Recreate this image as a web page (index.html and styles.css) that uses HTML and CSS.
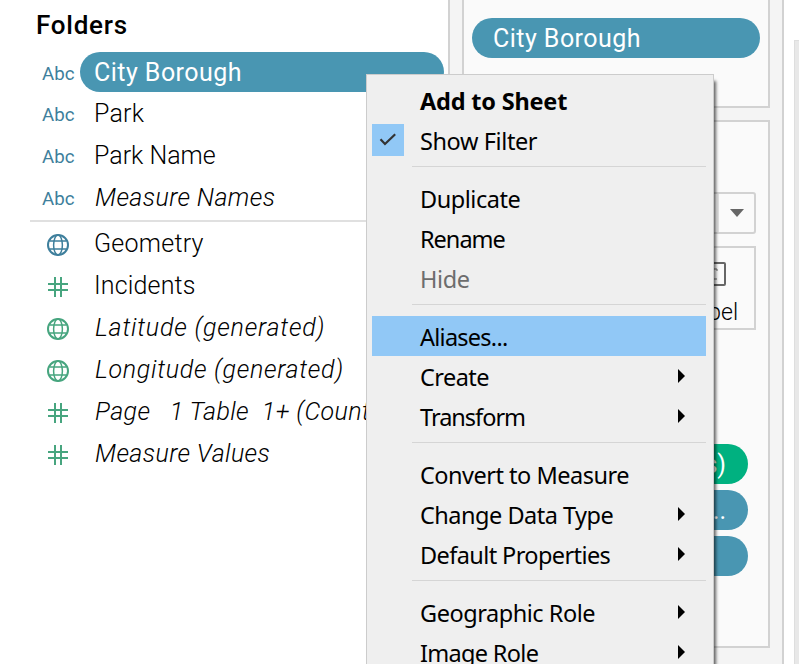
FILE: index.html
```html
<!DOCTYPE html>
<html lang="en">
<head>
<meta charset="utf-8">
<title>Sheet</title>
<link rel="stylesheet" href="styles.css">
</head>
<body>
<svg class="defs" width="0" height="0">
  <symbol id="globe" viewBox="0 0 22 22"><g fill="none" stroke="currentColor"><circle cx="11" cy="11" r="10" stroke-width="2"/><ellipse cx="11" cy="11" rx="4.4" ry="10" stroke-width="1.5"/><path d="M2.5 7h17M2.5 15h17" stroke-width="1.5"/></g></symbol>
  <symbol id="hash" viewBox="0 0 22 22"><path d="M8 1v20M14 1v20M1 8h20M1 14h20" stroke="currentColor" stroke-width="2" fill="none"/></symbol>
</svg>
<div class="app">
  <section class="data">
    <h2><span>Folders</span></h2>
    <ul class="fields">
      <li class="selected"><span class="abc">Abc</span><span class="name n1">City Borough</span></li>
      <li><span class="abc">Abc</span><span class="name n2">Park</span></li>
      <li><span class="abc">Abc</span><span class="name n3">Park Name</span></li>
      <li><span class="abc">Abc</span><span class="name gen n4">Measure Names</span></li>
    </ul>
    <ul class="fields measures">
      <li><svg class="icon blue"><use href="#globe"/></svg><span class="name n5">Geometry</span></li>
      <li><svg class="icon"><use href="#hash"/></svg><span class="name n6">Incidents</span></li>
      <li><svg class="icon"><use href="#globe"/></svg><span class="name gen n7">Latitude (generated)</span></li>
      <li><svg class="icon"><use href="#globe"/></svg><span class="name gen n8">Longitude (generated)</span></li>
      <li><svg class="icon"><use href="#hash"/></svg><span class="name gen n9">Page &nbsp; 1 Table &nbsp;1+ (Count)</span></li>
      <li><svg class="icon"><use href="#hash"/></svg><span class="name gen n10">Measure Values</span></li>
    </ul>
  </section>
  <section class="shelves">
    <div class="card filters"><div class="pill"><span class="n11">City Borough</span></div></div>
    <div class="card marks">
      <div class="combo"><svg width="14" height="8"><path d="M0 0h14L7 8z" fill="#666"/></svg></div>
      <div class="label-btn">
        <svg width="30" height="24" viewBox="0 0 30 24"><rect x="1" y="1" width="28" height="22" rx="1" fill="none" stroke="#666" stroke-width="2"/><path d="M11 9V7h10v2M16 7v10M13 17h8" stroke="#666" fill="none"/></svg>
        <span>Label</span>
      </div>
      <div class="mark-pills">
        <div class="pill green"><span>s)</span></div>
        <div class="pill"><span class="dots">...</span></div>
        <div class="pill"></div>
      </div>
    </div>
  </section>
  <section class="view"><div class="map"></div></section>
</div>
<nav class="menu">
  <div class="item bold"><span class="m1">Add to Sheet</span></div>
  <div class="item"><i class="check"><svg width="18" height="14" viewBox="0 0 18 14"><path d="M1.5 6.2 6 11 16.2 1.3" fill="none" stroke="#333" stroke-width="2.2"/></svg></i><span class="m2">Show Filter</span></div>
  <hr>
  <div class="item"><span class="m3">Duplicate</span></div>
  <div class="item"><span class="m4">Rename</span></div>
  <div class="item disabled"><span class="m5">Hide</span></div>
  <hr>
  <div class="item active"><span class="m6">Aliases...</span></div>
  <div class="item sub"><span class="m7">Create</span></div>
  <div class="item sub"><span class="m8">Transform</span></div>
  <hr>
  <div class="item"><span class="m9">Convert to Measure</span></div>
  <div class="item sub"><span class="m10">Change Data Type</span></div>
  <div class="item sub"><span class="m11">Default Properties</span></div>
  <hr>
  <div class="item sub"><span class="m12">Geographic Role</span></div>
  <div class="item sub"><span class="m13">Image Role</span></div>
</nav>
</body>
</html>
```
FILE: styles.css
```css
* { box-sizing: border-box; }
body { margin: 0; width: 799px; height: 664px; overflow: hidden; background: #fff; color: #000; font-family: Roboto, sans-serif; font-size: 25px; }
.defs { position: absolute; }
.app { display: flex; height: 664px; }
.data { width: 448px; flex: none; overflow: hidden; }
h2 { margin: 0; padding: 5px 0 0 36px; height: 52px; font-size: 26px; font-weight: 500; line-height: 40px; letter-spacing: .75px; }
.fields { list-style: none; margin: 0; padding: 0; }
.fields li { display: flex; align-items: center; height: 42px; padding-right: 4px; white-space: pre; }
.fields li.selected { height: 40px; }
.name { flex: 1; height: 40px; line-height: 42px; padding-left: 14px; font-weight: 300; }
.gen { font-style: italic; padding-left: 15px; }
.selected .name { background: #4996b2; color: #fff; border-radius: 20px; font-weight: 400; }
.abc { width: 80px; padding: 3px 0 0 42px; font-size: 18.7px; color: #3e7f9c; }
.measures { margin: 3px 0 0; }
.measures::before { content: ""; display: block; height: 2px; margin: -1px 0 1px 30px; background: #e0e0e0; }
.measures .name { line-height: 40px; }
.icon { width: 22px; height: 22px; margin: 2px 11px 0 47px; color: #47a57f; }
.icon.blue { color: #3e7f9c; }

.n1, .n11 { letter-spacing: .46px; }
.n2 { letter-spacing: .2px; }
.n4, .n10 { letter-spacing: .4px; }
.n5 { letter-spacing: .25px; }
.n6 { letter-spacing: .15px; }
.n7 { letter-spacing: .8px; }
.n8 { letter-spacing: .72px; }
.n9 { letter-spacing: .4px; }

.shelves { width: 336px; flex: none; padding: 0 12px; background: #f4f4f4; border: solid #d2d2d2; border-width: 0 2px; }
.card { background: #fafafa; border: 2px solid #d2d2d2; width: 308px; }
.filters { height: 108px; border-top: 0; padding: 18px 8px; }
.pill { height: 40px; line-height: 41px; border-radius: 20px; background: #4996b2; color: #fff; padding-left: 21px; white-space: nowrap; }
.marks { margin-top: 12px; height: 528px; padding: 70px 12px 0; }
.combo { height: 42px; border: 2px solid #d2d2d2; border-radius: 3px; display: flex; align-items: center; justify-content: flex-end; padding-right: 10px; background: linear-gradient(90deg, #fafafa 239px, #e3e3e3 239px, #e3e3e3 241px, #fafafa 241px); }
.label-btn { width: 90px; height: 84px; margin: 12px 0 0 auto; border: 2px solid #d2d2d2; padding-top: 14px; display: flex; flex-direction: column; align-items: center; font-size: 23px; font-weight: 300; }
.label-btn span { line-height: 30px; margin-top: 12px; }
.mark-pills { display: flex; flex-direction: column; gap: 6px; margin-top: 114px; width: 272px; }
.mark-pills .pill { padding: 0 22px 0 0; text-align: right; }
.pill.green { background: #00b180; }
.view { flex: 1; padding: 40px 0 0 10px; }
.map { height: 624px; background: #e8e8e8; border: solid #dedede; border-width: 1px 0 0 1px; }

.menu { position: absolute; left: 366px; top: 74px; width: 348px; height: 610px; padding: 5px 7px 0 5px; background: #efefef; border: 1px solid #ccc; box-shadow: 3px 6px 3px -1px rgba(0,0,0,.6); font-family: "Noto Sans", sans-serif; font-size: 23.5px; }
.item { height: 40px; padding: 2px 0 0 48px; line-height: 38px; position: relative; white-space: nowrap; display: flex; }
.bold { font-weight: 700; }
.disabled { color: #6d6d6d; }
.active { background: #91c8f6; }
.sub::after { content: ""; margin: 11px 21px 0 auto; border: solid transparent; border-width: 7px 0 7px 7px; border-left-color: #000; height: 0; }
.check { position: absolute; left: 0; top: 4px; width: 32px; height: 32px; background: #91c8f6; display: grid; place-items: center; }
.menu hr { height: 1px; border: 0; background: #d5d5d5; margin: 6px 0 11px 40px; }

.m1 { letter-spacing: -.2px; }
.m2, .m5 { letter-spacing: -.4px; }
.m3, .m12 { letter-spacing: -.46px; }
.m4 { letter-spacing: -1px; }
.m6 { letter-spacing: -.75px; }
.m7 { letter-spacing: -.55px; }
.m8 { letter-spacing: -1px; }
.m9, .m10 { letter-spacing: -.5px; }
.m11 { letter-spacing: -.6px; }
.m13 { letter-spacing: -.68px; }
```
